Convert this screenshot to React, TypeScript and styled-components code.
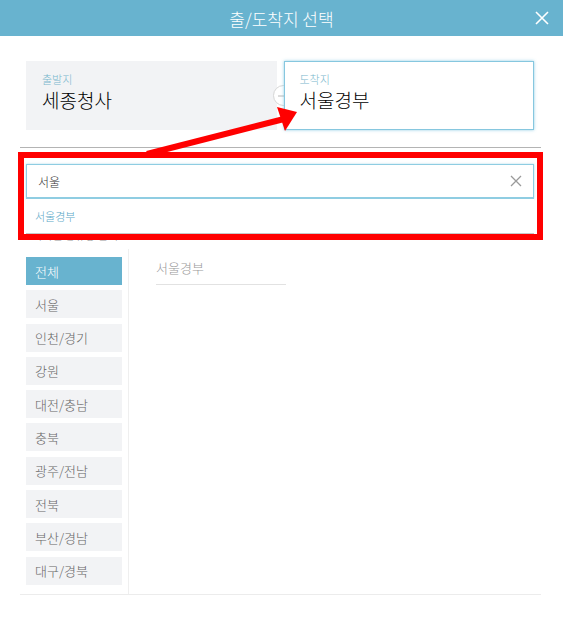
import React from "react";
import styled, { createGlobalStyle } from "styled-components";

const GlobalStyle = createGlobalStyle`
  body {
    margin: 0;
    background: #fff;
    font-family: "Noto Sans CJK KR", "Noto Sans", sans-serif;
  }
`;

const regions = [
  "전체",
  "서울",
  "인천/경기",
  "강원",
  "대전/충남",
  "충북",
  "광주/전남",
  "전북",
  "부산/경남",
  "대구/경북",
];

const Modal = styled.div`
  position: relative;
  width: 563px;
  height: 640px;
  background: #fff;
  overflow: hidden;
`;

const Header = styled.header`
  height: 36px;
  background: #68b3cf;
  color: #fff;
  display: flex;
  align-items: center;
  justify-content: center;
  position: relative;
  font-size: 17px;
  font-weight: 300;
`;

const CloseButton = styled.button`
  position: absolute;
  right: 10px;
  top: 7px;
  width: 22px;
  height: 22px;
  padding: 0;
  border: none;
  background: transparent;
  display: flex;
  align-items: center;
  justify-content: center;
`;

const Body = styled.div`
  padding: 0 22px 0 20px;
`;

const CardRow = styled.div`
  position: relative;
  display: flex;
  gap: 7px;
  margin-top: 25px;
  padding: 0 7px 0 6px;
`;

const PlaceCard = styled.div<{ $active?: boolean }>`
  position: relative;
  z-index: ${(p) => (p.$active ? 2 : 0)};
  flex: 1;
  height: 69px;
  box-sizing: border-box;
  padding: ${(p) => (p.$active ? "10px 15px" : "11px 16px")};
  background: ${(p) => (p.$active ? "#fff" : "#f2f3f5")};
  border: ${(p) => (p.$active ? "1px solid #86c7df" : "none")};
  box-shadow: ${(p) =>
    p.$active ? "0 0 3px rgba(110, 190, 220, 0.75)" : "none"};
`;

const PlaceLabel = styled.div`
  font-size: 11px;
  line-height: 14px;
  font-weight: 300;
  color: #7ab8cd;
`;

const PlaceName = styled.div`
  font-size: 19px;
  line-height: 26px;
  font-weight: 300;
  color: #000;
  margin-top: 1px;
`;

const SwapBadge = styled.div`
  position: absolute;
  z-index: 1;
  left: 253px;
  top: 24px;
  width: 21px;
  height: 21px;
  border-radius: 50%;
  background: #fff;
  border: 1px solid #d6d6d6;
  display: flex;
  align-items: center;
  justify-content: flex-start;
  padding-left: 3px;
  box-sizing: border-box;
`;

const Divider = styled.hr`
  margin: 17px 0 0;
  border: none;
  border-top: 1px solid #b4b4b4;
`;

const SearchWrap = styled.div`
  position: relative;
  margin-top: 16px;
  padding: 0 7px 0 6px;
`;

const SearchBox = styled.div`
  height: 35px;
  box-sizing: border-box;
  border: 1px solid #8fcde2;
  border-bottom-width: 2px;
  box-shadow: 0 0 2px rgba(120, 195, 220, 0.6);
  display: flex;
  align-items: center;
  padding: 0 11px;
  background: #fff;
`;

const SearchInput = styled.input`
  flex: 1;
  border: none;
  outline: none;
  font-family: inherit;
  font-size: 12px;
  font-weight: 300;
  color: #333;
  padding: 0;
  background: transparent;
`;

const Suggestions = styled.ul`
  position: absolute;
  z-index: 3;
  top: 100%;
  left: 6px;
  right: 7px;
  margin: 0;
  padding: 0 9px;
  list-style: none;
  height: 35px;
  box-sizing: border-box;
  background: #fff;
  border-bottom: 1px solid #c8c8c8;
  display: flex;
  align-items: center;
`;

const Suggestion = styled.li`
  font-size: 11px;
  font-weight: 300;
  color: #5aa8c7;
`;

const SectionCaption = styled.div`
  margin-top: 29px;
  padding-left: 12px;
  font-size: 11px;
  line-height: 14px;
  font-weight: 300;
  color: #999;
`;

const Panel = styled.div`
  display: flex;
  height: 345px;
  margin-top: 7px;
  border-bottom: 1px solid #ececec;
`;

const Sidebar = styled.ul`
  width: 109px;
  margin: 0;
  padding: 8px 6px 0 6px;
  box-sizing: border-box;
  list-style: none;
  border-right: 1px solid #efefef;
  display: flex;
  flex-direction: column;
  gap: 5.3px;
`;

const RegionItem = styled.li<{ $active?: boolean }>`
  height: 28px;
  flex-shrink: 0;
  padding-left: 9px;
  display: flex;
  align-items: center;
  font-size: 13px;
  font-weight: 300;
  background: ${(p) => (p.$active ? "#68b3cf" : "#f2f3f5")};
  color: ${(p) => (p.$active ? "#fff" : "#666")};
`;

const Results = styled.div`
  flex: 1;
  padding: 10px 0 0 27px;
`;

const ResultItem = styled.div`
  width: 130px;
  height: 25px;
  border-bottom: 1px solid #e2e2e2;
  font-size: 13px;
  font-weight: 300;
  color: #999;
  line-height: 18px;
`;

const HighlightBox = styled.div`
  position: absolute;
  z-index: 10;
  left: 18px;
  top: 152px;
  width: 525px;
  height: 88px;
  box-sizing: border-box;
  border: 6.5px solid #ff0000;
  pointer-events: none;
`;

const ArrowOverlay = styled.svg`
  position: absolute;
  z-index: 11;
  left: 0;
  top: 0;
  pointer-events: none;
`;

const App: React.FC = () => {
  return (
    <Modal>
      <GlobalStyle />
      <Header>
        출/도착지 선택
        <CloseButton aria-label="닫기">
          <svg width="14" height="14" viewBox="0 0 14 14">
            <path d="M1 1L13 13M13 1L1 13" stroke="#fff" strokeWidth="1.6" />
          </svg>
        </CloseButton>
      </Header>
      <Body>
        <CardRow>
          <PlaceCard>
            <PlaceLabel>출발지</PlaceLabel>
            <PlaceName>세종청사</PlaceName>
          </PlaceCard>
          <SwapBadge>
            <svg width="12" height="8" viewBox="0 0 12 8">
              <path
                d="M1 4H10M7 1L10 4L7 7"
                stroke="#b8b8b8"
                strokeWidth="1"
                fill="none"
              />
            </svg>
          </SwapBadge>
          <PlaceCard $active>
            <PlaceLabel>도착지</PlaceLabel>
            <PlaceName>서울경부</PlaceName>
          </PlaceCard>
        </CardRow>
        <Divider />
        <SearchWrap>
          <SearchBox>
            <SearchInput defaultValue="서울" />
            <svg width="12" height="12" viewBox="0 0 12 12">
              <path d="M1 1L11 11M11 1L1 11" stroke="#9a9a9a" strokeWidth="1.3" />
            </svg>
          </SearchBox>
          <Suggestions>
            <Suggestion>서울경부</Suggestion>
          </Suggestions>
        </SearchWrap>
        <SectionCaption>지역별 정류장 선택</SectionCaption>
        <Panel>
          <Sidebar>
            {regions.map((r, i) => (
              <RegionItem key={r} $active={i === 0}>
                {r}
              </RegionItem>
            ))}
          </Sidebar>
          <Results>
            <ResultItem>서울경부</ResultItem>
          </Results>
        </Panel>
      </Body>
      <HighlightBox />
      <ArrowOverlay width="563" height="640" viewBox="0 0 563 640">
        <line x1="147" y1="154" x2="284" y2="119" stroke="#ff0000" strokeWidth="6" />
        <polygon points="297,112 277,107 285,131" fill="#ff0000" />
      </ArrowOverlay>
    </Modal>
  );
};

export default App;
